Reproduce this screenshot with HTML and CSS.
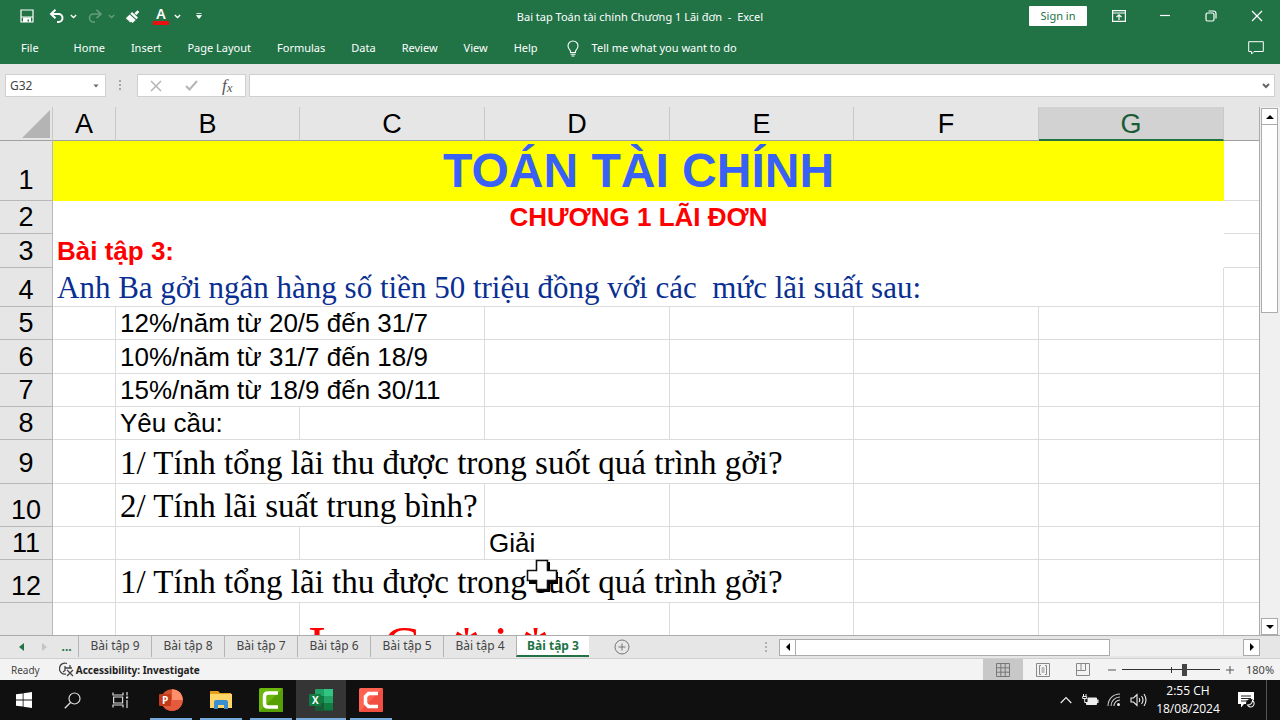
FILE: index.html
```html
<!DOCTYPE html>
<html lang="vi">
<head>
<meta charset="utf-8">
<title>Bai tap Toán tài chính Chương 1 Lãi đơn - Excel</title>
<link rel="stylesheet" href="styles.css">
</head>
<body>
<header class="ribbon">
  <div class="titlebar">
    <div class="quick">
      <button class="icon-btn" aria-label="Save"><svg width="14" height="14" viewBox="0 0 14 14"><path d="M1 1h12v12H1zM1 8h12" fill="none" stroke="#fff" stroke-width="1.200"/><path d="M3 8.500h8V13H9V10.500H7.500V13H3z" fill="#fff"/></svg></button>
      <div class="split">
        <button class="icon-btn" aria-label="Undo"><svg width="16" height="14" viewBox="0 0 16 14"><path d="M2 5h7.500a4 4 0 0 1 0 8H8" fill="none" stroke="#fff" stroke-width="2"/><path d="M6.500 .8L2 5l4.500 4.200" fill="none" stroke="#fff" stroke-width="2"/></svg></button>
        <button class="chev" aria-label="Undo list"><svg width="7" height="5" viewBox="0 0 7 5"><path d="M.8 1l2.700 2.500L6.200 1" fill="none" stroke="#fff" stroke-width="1.300"/></svg></button>
      </div>
      <div class="split dim">
        <button class="icon-btn" aria-label="Redo"><svg width="16" height="14" viewBox="0 0 16 14"><path d="M14 5H6.500a4 4 0 0 0 0 8H8" fill="none" stroke="#fff" stroke-width="1.600"/><path d="M9.500 .8L14 5L9.500 9.200" fill="none" stroke="#fff" stroke-width="1.600"/></svg></button>
        <button class="chev" aria-label="Redo list"><svg width="7" height="5" viewBox="0 0 7 5"><path d="M.8 1l2.700 2.500L6.200 1" fill="none" stroke="#fff" stroke-width="1.300"/></svg></button>
      </div>
      <button class="icon-btn" aria-label="Format Painter"><svg width="16" height="15" viewBox="0 0 16 15"><path d="M12.500 1.200l1.800 1.700-3 3.200-1.900-1.800z" fill="#fff"/><path d="M7 3l6 5.500-1.600 1.700L5.400 4.700z" fill="#fff"/><path d="M4.700 5.500l6 5.400L7.500 14 6 12.600l-.8.900-1.400-1.200.9-1-1.200.5L.8 9.200z" fill="#fff"/></svg></button>
      <div class="split wide">
        <button class="font-color" aria-label="Font Color">A</button>
        <button class="chev" aria-label="Font colors"><svg width="7" height="5" viewBox="0 0 7 5"><path d="M.8 1l2.700 2.500L6.200 1" fill="none" stroke="#fff" stroke-width="1.300"/></svg></button>
      </div>
      <button class="chev more" aria-label="Customize toolbar"><svg width="6" height="6" viewBox="0 0 6 6"><path d="M.5 .5h5M.5 2.500h5L3 5.500z" fill="#fff" stroke="#fff" stroke-width=".8"/></svg></button>
    </div>
    <div class="doc-title">Bai tap Toán tài chính Chương 1 Lãi đơn&nbsp; -&nbsp; Excel</div>
    <div class="window-tools">
      <button class="sign-in">Sign in</button>
      <button class="win" aria-label="Ribbon options"><svg width="14" height="12" viewBox="0 0 14 12"><path d="M.6.600h12.800v10.800H.6zM.6 3h12.800M7 10V5M4.500 7L7 4.700 9.500 7" fill="none" stroke="#fff" stroke-width="1.200"/></svg></button>
      <button class="win" aria-label="Minimize"><svg width="12" height="12" viewBox="0 0 12 12"><path d="M1 5.500h10" stroke="#fff" stroke-width="1.200"/></svg></button>
      <button class="win" aria-label="Restore"><svg width="12" height="12" viewBox="0 0 12 12"><rect x="1" y="3" width="8" height="8" rx="1.500" fill="none" stroke="#fff" stroke-width="1.200"/><path d="M3.500 1h5a2.500 2.500 0 0 1 2.500 2.500v5" fill="none" stroke="#fff" stroke-width="1.200"/></svg></button>
      <button class="win" aria-label="Close"><svg width="12" height="12" viewBox="0 0 12 12"><path d="M1 1l10 10M11 1L1 11" stroke="#fff" stroke-width="1.300"/></svg></button>
    </div>
  </div>
  <nav class="menu">
    <button class="file">File</button><button>Home</button><button>Insert</button><button>Page Layout</button><button>Formulas</button><button>Data</button><button>Review</button><button>View</button><button>Help</button>
    <button class="tell"><svg width="12" height="17" viewBox="0 0 12 17"><path d="M3.500 12.500V11C2.500 9.800 1 8.300 1 6a5 5 0 0 1 10 0c0 2.300-1.500 3.800-2.500 5v1.500zM3.500 14.300h5M4.500 16h3" fill="none" stroke="#fff" stroke-width="1.100"/></svg><span>Tell me what you want to do</span></button>
    <button class="comments" aria-label="Comments"><svg width="16" height="14" viewBox="0 0 16 14"><path d="M.7.700h14.600v9.800H6L3.500 13v-2.500H.7z" fill="none" stroke="#fff"/></svg></button>
  </nav>
</header>

<section class="formula-bar">
  <div class="name-box"><input type="text" value="G32" aria-label="Name Box"><button aria-label="Names"><svg width="6" height="4" viewBox="0 0 6 4"><path d="M.5.500h5L3 3.500z" fill="#666"/></svg></button></div>
  <svg class="grip" width="3" height="11" viewBox="0 0 3 11"><path d="M0 0h2v2H0zM0 4h2v2H0zM0 8h2v2H0z" fill="#a6a6a6"/></svg>
  <div class="fx-box">
    <button aria-label="Cancel"><svg width="12" height="12" viewBox="0 0 12 12"><path d="M1 1l10 10M11 1L1 11" stroke="#b5b5b5" stroke-width="1.500"/></svg></button>
    <button aria-label="Enter"><svg width="13" height="11" viewBox="0 0 13 11"><path d="M1 6l3.500 3.500L12 1" fill="none" stroke="#b5b5b5" stroke-width="2"/></svg></button>
    <button class="fx" aria-label="Insert Function">f<span>x</span></button>
  </div>
  <div class="formula"><input type="text" aria-label="Formula Bar"><button aria-label="Expand"><svg width="8" height="6" viewBox="0 0 8 6"><path d="M1 1l3 3 3-3" fill="none" stroke="#666" stroke-width="2"/></svg></button></div>
</section>

<main class="workspace">
  <div class="sheet">
    <table class="grid">
      <colgroup><col class="c-head"><col class="c-a"><col class="c-b"><col class="c-c"><col class="c-c"><col class="c-b"><col class="c-c"><col class="c-c"><col></colgroup>
      <thead>
        <tr class="h34"><th class="corner"><svg width="28" height="28" viewBox="0 0 28 28"><path d="M28 0v28H0z" fill="#b4b4b4"/></svg></th><th>A</th><th>B</th><th>C</th><th>D</th><th>E</th><th>F</th><th class="selected">G</th><th class="blank"></th></tr>
      </thead>
      <tbody>
        <tr class="h60"><th class="raised">1</th><td class="title" colspan="7">TOÁN TÀI CHÍNH</td><td></td></tr>
        <tr class="h33"><th>2</th><td class="chapter" colspan="7">CHƯƠNG 1 LÃI ĐƠN</td><td></td></tr>
        <tr class="h34"><th>3</th><td class="exercise" colspan="7">Bài tập 3:</td><td></td></tr>
        <tr class="h39"><th>4</th><td class="serif blue" colspan="7">Anh Ba gởi ngân hàng số tiền 50 triệu đồng với các&nbsp; mức lãi suất sau:</td><td></td></tr>
        <tr class="h33"><th>5</th><td></td><td colspan="2">12%/năm từ 20/5 đến 31/7</td><td></td><td></td><td></td><td></td><td></td></tr>
        <tr class="h34"><th>6</th><td></td><td colspan="2">10%/năm từ 31/7 đến 18/9</td><td></td><td></td><td></td><td></td><td></td></tr>
        <tr class="h33"><th>7</th><td></td><td colspan="2">15%/năm từ 18/9 đến 30/11</td><td></td><td></td><td></td><td></td><td></td></tr>
        <tr class="h33"><th>8</th><td></td><td>Yêu cầu:</td><td></td><td></td><td></td><td></td><td></td><td></td></tr>
        <tr class="h44"><th class="raised">9</th><td></td><td class="serif" colspan="4">1/ Tính tổng lãi thu được trong suốt quá trình gởi?</td><td></td><td></td><td></td></tr>
        <tr class="h43"><th>10</th><td></td><td class="serif" colspan="2">2/ Tính lãi suất trung bình?</td><td></td><td></td><td></td><td></td><td></td></tr>
        <tr class="h33"><th>11</th><td></td><td></td><td></td><td>Giải</td><td></td><td></td><td></td><td></td></tr>
        <tr class="h43"><th>12</th><td></td><td class="serif" colspan="4">1/ Tính tổng lãi thu được trong suốt quá trình gởi?</td><td></td><td></td><td></td></tr>
        <tr class="h80"><th></th><td></td><td></td><td class="equation" colspan="2">I = C<small>0</small> * i *</td><td></td><td></td><td></td><td></td></tr>
      </tbody>
    </table>
    <svg class="cursor" width="34" height="34" viewBox="0 0 34 34"><path d="M13 3h12v10h8v12h-8v8H13v-8H4V13h9z" fill="#000"/><path d="M11.500 1.500h11v10h9v10h-9v9h-11v-9h-9v-10h9z" fill="#fff" stroke="#111" stroke-width="1.600"/></svg>
  </div>
  <div class="vscroll">
    <button aria-label="Scroll up"><svg width="8" height="4" viewBox="0 0 8 4"><path d="M4 0l4 4H0z"/></svg></button>
    <div class="thumb"></div>
    <button class="last" aria-label="Scroll down"><svg width="8" height="4" viewBox="0 0 8 4"><path d="M4 4l4-4H0z"/></svg></button>
  </div>
</main>

<section class="tab-strip">
  <div class="tab-nav">
    <button aria-label="Previous sheets"><svg width="5" height="8" viewBox="0 0 5 8"><path d="M5 0v8L0 4z" fill="#217346"/></svg></button>
    <button aria-label="Next sheets"><svg width="5" height="8" viewBox="0 0 5 8"><path d="M0 0v8l5-4z" fill="#c4c4c4"/></svg></button>
    <button class="dots">...</button>
  </div>
  <div class="tabs">
    <button>Bài tập 9</button><button>Bài tập 8</button><button>Bài tập 7</button><button>Bài tập 6</button><button>Bài tập 5</button><button>Bài tập 4</button><button class="active">Bài tập 3</button>
  </div>
  <button class="add" aria-label="New sheet"><svg width="16" height="16" viewBox="0 0 16 16"><circle cx="8" cy="8" r="7" fill="none" stroke="#777"/><path d="M8 4.500v7M4.500 8h7" stroke="#777"/></svg></button>
  <div class="hscroll-area">
    <svg class="grip" width="3" height="11" viewBox="0 0 3 11"><path d="M0 0h2v2H0zM0 4h2v2H0zM0 8h2v2H0z" fill="#b0b0b0"/></svg>
    <div class="hscroll">
      <button aria-label="Scroll left"><svg width="4" height="8" viewBox="0 0 4 8"><path d="M4 0v8L0 4z"/></svg></button>
      <div class="thumb"></div>
      <button class="last" aria-label="Scroll right"><svg width="4" height="8" viewBox="0 0 4 8"><path d="M0 0v8l4-4z"/></svg></button>
    </div>
  </div>
</section>

<footer class="status">
  <span class="ready">Ready</span>
  <button class="access"><svg width="15" height="15" viewBox="0 0 15 15"><path d="M8 1.500A5.500 5.500 0 1 0 7 12M6 4v4.500L4 10M6 6h7M11 3v3M8 8l6 6M14 8l-6 6" fill="none" stroke="#444" stroke-width="1.300"/></svg><span>Accessibility: Investigate</span></button>
  <div class="views">
    <button class="on" aria-label="Normal"><svg width="14" height="14" viewBox="0 0 14 14"><path d="M.5.500h13v13H.5zM.5 4.800h13M.5 9.200h13M4.800.500v13M9.200.500v13" fill="none" stroke="#777"/></svg></button>
    <button aria-label="Page Layout view"><svg width="14" height="14" viewBox="0 0 14 14"><path d="M.5.500h13v13H.5zM5 2.500H3.500v9H5M9 2.500h1.500v9H9M5.500 5h3M5.500 7h3M5.500 9h3" fill="none" stroke="#888"/></svg></button>
    <button aria-label="Page Break preview"><svg width="14" height="14" viewBox="0 0 14 14"><path d="M.5.500h13v12H.5zM.5 7.500h9V.500M5 .5v7" fill="none" stroke="#888"/></svg></button>
  </div>
  <div class="zoom">
    <button aria-label="Zoom out"><svg width="8" height="8" viewBox="0 0 8 8"><path d="M0 4h8" stroke="#555"/></svg></button>
    <input type="range" min="0" max="100" value="64" aria-label="Zoom">
    <button aria-label="Zoom in"><svg width="8" height="8" viewBox="0 0 8 8"><path d="M0 4h8M4 0v8" stroke="#555"/></svg></button>
    <span>180%</span>
  </div>
</footer>

<footer class="taskbar">
  <div class="apps">
    <button class="sys" aria-label="Start"><svg width="16" height="16" viewBox="0 0 16 16"><path d="M0 2.300L6.700 1.400v6.200H0zM7.500 1.300L16 0v7.600H7.500zM0 8.400h6.700v6.200L0 13.700zM7.500 8.400H16V16l-8.500-1.200z" fill="#fff"/></svg></button>
    <button class="sys" aria-label="Search"><svg width="17" height="17" viewBox="0 0 17 17"><circle cx="10.500" cy="6.500" r="5.500" fill="none" stroke="#ddd" stroke-width="1.200"/><path d="M6.500 10.500L.8 16.200" stroke="#ddd" stroke-width="1.300"/></svg></button>
    <button class="sys" aria-label="Task View"><svg width="17" height="16" viewBox="0 0 17 16"><path d="M1 .5v2.500h10V.500M1 15.500V13h10v2.500M1.600 5h9v6h-9zM15 0v3.500M15 8v8" fill="none" stroke="#ddd" stroke-width="1.200"/><path d="M14 4.500h2.200v2H14z" fill="#ddd"/></svg></button>
    <button class="app" aria-label="PowerPoint"><svg width="24" height="22" viewBox="0 0 24 22"><circle cx="13" cy="11" r="10.800" fill="#d35230"/><path d="M13 .2A10.800 10.800 0 0 1 23.800 11H13z" fill="#ff8f6b"/><path d="M2.200 11h21.600A10.800 10.800 0 0 1 13 21.800 10.800 10.800 0 0 1 2.200 11z" fill="#e35a3c"/><rect y="5" width="12" height="12" rx="1" fill="#c13b1b"/><text x="3" y="15" class="logo-letter">P</text></svg></button>
    <button class="app" aria-label="File Explorer"><svg width="22" height="20" viewBox="0 0 22 20"><path d="M0 1h8l2 2h11v5H0z" fill="#e6a01e"/><path d="M0 4h22v14H0z" fill="#ffd667"/><path d="M4 19v-7q0-2 2-2h10q2 0 2 2v7h-4v-4H8v4z" fill="#3b8ed0"/></svg></button>
    <button class="app" aria-label="Camtasia"><svg width="24" height="24" viewBox="0 0 24 24"><rect width="24" height="24" rx="1.500" fill="#6cb70c"/><path d="M0 24L24 0v22.500q0 1.500-1.500 1.500z" fill="#56a005"/><path d="M19 5h-10Q5.500 5 5.500 8.500v7Q5.500 19 9 19h10" fill="none" stroke="#fff" stroke-width="3.500"/></svg></button>
    <button class="app current" aria-label="Excel"><svg width="24" height="22" viewBox="0 0 24 22"><rect x="6" y="0" width="18" height="22" rx="1" fill="#21a366"/><path d="M15 0h9v7h-9z" fill="#33c481"/><path d="M6 7h9v7H6z" fill="#107c41"/><path d="M6 14h18v8H6z" fill="#185c37"/><path d="M15 14h9v7h-9z" fill="#107c41"/><rect y="5" width="12" height="12" rx="1" fill="#107c41"/><text x="3" y="15" class="logo-letter">X</text></svg></button>
    <button class="app" aria-label="Camtasia Recorder"><svg width="24" height="24" viewBox="0 0 24 24"><rect width="24" height="24" rx="1.500" fill="#ff6250"/><path d="M0 24L24 0v22.500q0 1.500-1.500 1.500z" fill="#f24f40"/><path d="M19 5.500H9.500L6.500 8.500v7l3 3H19" fill="none" stroke="#fff" stroke-width="3.500"/></svg></button>
  </div>
  <div class="tray">
    <button aria-label="Hidden icons"><svg width="12" height="8" viewBox="0 0 12 8"><path d="M.7 7L6 1.500 11.300 7" fill="none" stroke="#eee" stroke-width="1.200"/></svg></button>
    <button aria-label="Battery"><svg width="17" height="13" viewBox="0 0 17 13"><path d="M6 4h8.500v6.500H4.500V8.500H6z" fill="#eee" stroke="#eee"/><path d="M15.800 5.500v3.500" stroke="#eee" stroke-width="1.400"/><path d="M1.500 0v2M4 0v2M.7 2.500h4v2h-4zM2.700 4.500v4h2" fill="none" stroke="#eee"/></svg></button>
    <button aria-label="Network"><svg width="14" height="14" viewBox="0 0 14 14"><path d="M1 13C1 6 6 1 13 1M4 13c0-5 4-9 9-9M7 13c0-3 2.500-6 6-6" fill="none" stroke="#ccc" stroke-width="1.100"/><circle cx="11.500" cy="11.500" r="1.500" fill="#eee"/></svg></button>
    <button aria-label="Volume"><svg width="17" height="14" viewBox="0 0 17 14"><path d="M1 5h2.500L7 1.500v11L3.500 9H1zM9 5q1.500 2 0 4M11.500 3q3 4 0 8M14 1q4 6 0 12" fill="none" stroke="#eee" stroke-width="1.100"/></svg></button>
    <div class="clock"><span>2:55 CH</span><span>18/08/2024</span></div>
    <button class="notify" aria-label="Notifications"><svg width="18" height="17" viewBox="0 0 18 17"><path d="M1 0h16v12H7l-3 3.500V12H1z" fill="#fff"/><path d="M4 4h10M4 6.500h10M4 9h6" stroke="#222" stroke-width="1"/><circle cx="13.500" cy="11.500" r="4.500" fill="#101010"/><path d="M15.500 8.500a3.500 3.500 0 1 1-5 4.500q4.500 0 5-4.500z" fill="none" stroke="#eee" stroke-width="1.100"/></svg></button>
    <div class="show-desktop"></div>
  </div>
</footer>
</body>
</html>
```
FILE: styles.css
```css
* { box-sizing: border-box; }
body {
  margin: 0;
  height: 100vh;
  display: flex;
  flex-direction: column;
  overflow: hidden;
  background: #e6e6e6;
  font-family: "Noto Sans", "Open Sans", sans-serif;
  font-size: 11px;
  line-height: 16px;
  color: #444;
}
button {
  border: 0;
  padding: 0;
  margin: 0;
  background: none;
  font: inherit;
  color: inherit;
  display: flex;
  align-items: center;
  justify-content: center;
  white-space: nowrap;
}
input { font: inherit; color: inherit; border: 0; padding: 0; margin: 0; background: none; outline: 0; min-width: 0; }
svg { display: block; flex: none; }

/* Ribbon */
.ribbon { background: #217346; color: #fff; flex: none; }
.titlebar { display: grid; grid-template-columns: 1fr auto 1fr; height: 32px; align-items: center; }
.doc-title { padding-top: 2px; }
.quick { display: flex; align-items: center; gap: 6px; padding-left: 15px; }
.icon-btn { width: 24px; height: 24px; }
.split { display: flex; align-items: center; }
.chev { width: 8px; height: 24px; }
.wide .chev { width: 12px; }
.more { width: 20px; }
.dim { opacity: .3; }
.font-color { width: 16px; height: 17px; margin: 0 2px; border-bottom: 4px solid #e81010; font-size: 14px; font-weight: 600; line-height: 12px; }
.window-tools { display: flex; align-items: center; justify-content: flex-end; }
.sign-in { background: #fff; color: #217346; width: 58px; height: 20px; border-radius: 1px; margin-right: 9px; font-size: 11px; }
.win { width: 46px; height: 32px; }
.menu { display: flex; height: 32px; padding: 0 8px; }
.menu button { padding: 0 13px; }
.menu .file { padding-right: 22px; }
.menu .tell { padding-left: 16px; gap: 13px; }
.menu .comments { margin-left: auto; padding: 0 8px; }

/* Formula bar */
.formula-bar { display: flex; align-items: center; height: 43px; padding: 0 5px; flex: none; }
.name-box, .fx-box, .formula { display: flex; height: 23px; background: #fff; border: 1px solid #d0d0d0; }
.name-box { width: 101px; font-size: 12px; }
.name-box input { flex: 1; padding-left: 4px; }
.name-box button { width: 18px; }
.grip { margin: 0 15px 0 13px; }
.fx-box { width: 109px; margin-right: 3px; }
.fx-box button { flex: 1; }
.fx { font-family: "Liberation Serif", serif; font-style: italic; font-size: 17px; color: #555; }
.fx span { font-size: 13px; padding-top: 4px; }
.formula { flex: 1; }
.formula input { flex: 1; }
.formula button { width: 16px; }

/* Worksheet */
.workspace { flex: 1; min-height: 0; display: grid; grid-template-columns: 1fr 20px; }
.sheet { position: relative; overflow: hidden; background: #fff; border-right: 1px solid #ababab; }
.grid {
  width: 100%;
  table-layout: fixed;
  border-collapse: separate;
  border-spacing: 0;
  font-family: "Liberation Sans", Arial, sans-serif;
  font-size: 26px;
  line-height: 30px;
  color: #000;
}
.c-head { width: 53px; }
.c-a { width: 63px; }
.c-b { width: 184px; }
.c-c { width: 185px; }
.grid th, .grid td { padding: 0 0 1px; border: 0 solid #dcdcdc; border-width: 0 1px 1px 0; white-space: nowrap; vertical-align: bottom; }
.grid td { padding-left: 4px; text-align: left; }
.grid td:last-child { border-right: 0; }
.grid th { background: #e6e6e6; border-color: #b8b8b8; font-size: 27px; font-weight: 400; }
.grid thead th { border-right-color: #c8c8c8; border-bottom-color: #a0a0a0; }
.grid .raised { padding-bottom: 5px; }
.grid .corner { padding: 3px 2px 2px 22px; }
.grid .selected { background: #d2d2d2; color: #185c37; border-bottom: 2px solid #217346; padding: 0; }
.grid .blank { border-right: 0; }
.h33 { height: 33px; }
.h34 { height: 34px; }
.h39 { height: 39px; }
.h43 { height: 43px; }
.h44 { height: 44px; }
.h60 { height: 60px; }
.h80 { height: 80px; }
.grid .title { background: #ff0; color: #3961f5; font-size: 48px; line-height: 56px; font-weight: 700; text-align: center; border: 0; padding: 0 0 2px; }
.grid .chapter { color: #f00; font-weight: 700; text-align: center; border: 0; padding: 0 0 2px; }
.grid .exercise { color: #f00; font-weight: 700; border: 0; padding-bottom: 2px; }
.grid .serif { font-family: "Liberation Serif", "Times New Roman", serif; font-size: 33px; line-height: 38px; }
.grid .blue { color: #0a2f92; font-size: 31px; line-height: 36px; padding-bottom: 0; }
.grid .equation { font-family: "Liberation Serif", "Times New Roman", serif; font-size: 54px; line-height: 60px; color: #f00; padding-left: 8px; }
.equation small { font-size: 40px; }
.cursor { position: absolute; left: 525px; top: 452px; }

/* Scroll bars */
.vscroll { display: flex; flex-direction: column; padding: 1px 2px 0 1px; background: #f0f0f0; }
.vscroll button, .hscroll button { width: 17px; height: 17px; border: 1px solid #ababab; background: #fff; flex: none; }
.vscroll .thumb { height: 188px; border: 1px solid #ababab; border-top: 0; background: #fff; }
.vscroll .last { margin-top: auto; }
.hscroll-area { margin-left: auto; width: 515px; display: flex; align-items: center; padding-right: 20px; }
.hscroll-area .grip { margin: 0 11px 0 0; }
.hscroll { display: flex; flex: 1; background: #f0f0f0; }
.hscroll .thumb { flex: 0 1 314px; border: 1px solid #ababab; border-left: 0; background: #fff; }
.hscroll .last { margin-left: auto; }

/* Sheet tabs */
.tab-strip { display: flex; height: 24px; flex: none; border-top: 1px solid #ababab; border-bottom: 1px solid #d0d0d0; font-size: 12px; }
.tab-nav { display: flex; width: 78px; padding-left: 10px; }
.tab-nav button { width: 23px; }
.tab-nav .dots { color: #217346; font-weight: 700; }
.tabs { display: flex; }
.tabs button { width: 73px; height: 21px; padding-bottom: 2px; border-left: 1px solid #b4b4b4; }
.tabs .active { background: #fff; color: #217346; font-weight: 700; border-bottom: 2px solid #217346; padding-bottom: 0; }
.add { width: 66px; }

/* Status bar */
.status { display: flex; height: 21px; flex: none; background: #f3f3f3; align-items: center; padding-left: 11px; font-size: 10px; }
.access { margin-left: 19px; font-weight: 700; color: #222; gap: 2px; }
.views { display: flex; margin-left: auto; height: 21px; }
.views button { width: 40px; }
.views .on { background: #c8c8c8; }
.zoom { display: flex; align-items: center; width: 177px; padding-left: 5px; }
.zoom input { appearance: none; width: 98px; height: 12px; margin: 0 6px 0 6px; background: linear-gradient(#333, #333) 49px 3px / 1px 6px no-repeat, linear-gradient(#333, #333) 0 5px / 100% 1px no-repeat; }
.zoom input::-webkit-slider-thumb { appearance: none; width: 5px; height: 12px; background: #444; }
.zoom span { margin-left: 12px; font-size: 11px; }

/* Taskbar */
.taskbar { display: flex; height: 40px; flex: none; background: #101010; color: #fff; }
.apps { display: flex; }
.sys { width: 48px; }
.app { width: 42px; margin: 0 4px; border-bottom: 2px solid #76a9dc; padding-top: 2px; }
.apps .sys + .app { margin-left: 6px; }
.current { width: 50px; margin: 0; background: #353535; }
.logo-letter { fill: #fff; font: 700 10px "Open Sans", sans-serif; }
.tray { display: flex; align-items: center; margin-left: auto; }
.tray button { width: 24px; }
.clock { display: flex; flex-direction: column; align-items: center; width: 76px; font-family: "Open Sans", sans-serif; font-size: 12px; line-height: 18px; }
.tray .notify { width: 40px; }
.show-desktop { width: 14px; height: 40px; border-left: 1px solid #555; }
```
